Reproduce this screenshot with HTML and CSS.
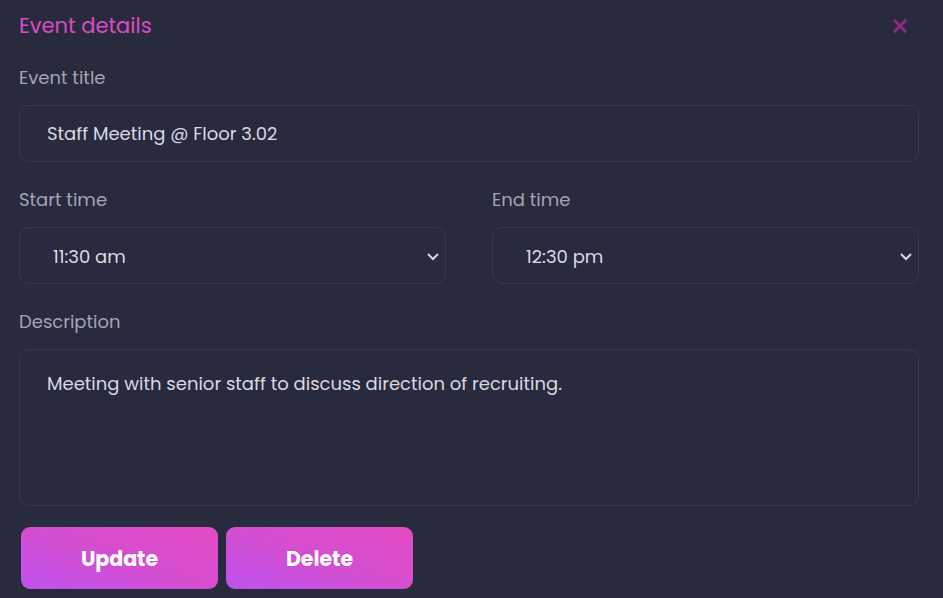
FILE: index.html
```html
<!DOCTYPE html>
<html>
<head>
<meta charset="utf-8">
<link rel="stylesheet" href="styles.css">
</head>
<body>
<div class="modal">
  <div class="header">
    <h2 class="title">Event details</h2>
    <button class="close" aria-label="Close">
      <svg width="14" height="14" viewBox="0 0 14 14"><path d="M2 2L12 12M12 2L2 12" stroke="#8e2c80" stroke-width="3" stroke-linecap="square"/></svg>
    </button>
  </div>
  <label class="label">Event title</label>
  <div class="field input">Staff Meeting @ Floor 3.02</div>
  <div class="row">
    <div class="col">
      <label class="label">Start time</label>
      <div class="field select"><span>11:30 am</span>
        <svg class="chev" width="14" height="9" viewBox="0 0 14 9"><path d="M2 2L7 7L12 2" fill="none" stroke="#d8d9e2" stroke-width="2"/></svg>
      </div>
    </div>
    <div class="col">
      <label class="label">End time</label>
      <div class="field select"><span>12:30 pm</span>
        <svg class="chev" width="14" height="9" viewBox="0 0 14 9"><path d="M2 2L7 7L12 2" fill="none" stroke="#d8d9e2" stroke-width="2"/></svg>
      </div>
    </div>
  </div>
  <label class="label">Description</label>
  <div class="field textarea">Meeting with senior staff to discuss direction of recruiting.</div>
  <div class="actions">
    <button class="btn btn-update">Update</button>
    <button class="btn btn-delete">Delete</button>
  </div>
</div>
</body>
</html>
```
FILE: styles.css
```css
* { box-sizing: border-box; }
html, body { margin: 0; padding: 0; background: #282a3d; height: 100%; }
body { font-family: "Poppins", "Open Sans", sans-serif; color: #d9dae3; }
.modal { padding: 0 24px 0 19px; }
.header { display: flex; justify-content: space-between; align-items: center; height: 52px; }
.title { margin: 0; font-weight: 400; font-size: 21px; color: #dc4cc4; line-height: 52px; }
.close { background: none; border: none; padding: 0; margin-right: 12px; display: flex; cursor: pointer; }
.label { display: block; font-size: 18px; line-height: 24px; color: #a3a5b4; margin-top: 14px; }
.field { border: 1px solid #343954; border-radius: 10px; font-size: 18px; color: #d9dae3; margin-top: 15px; }
.input { height: 57px; display: flex; align-items: center; padding: 0 27px; }
.row { display: flex; gap: 46px; margin-top: 2px; }
.row .label { margin-top: 24px; }
.col { flex: 1; }
.select { height: 57px; display: flex; align-items: center; justify-content: space-between; padding: 1px 5px 0 33px; }
.row + .label { margin-top: 26px; }
.textarea { height: 157px; padding: 23px 27px; line-height: 22px; }
.actions { display: flex; gap: 8px; margin: 21px 0 0 2px; }
.btn { border: none; border-radius: 9px; height: 62px; color: #fff; font-family: "Poppins", "Open Sans", sans-serif; font-weight: 700; font-size: 20.5px; background: linear-gradient(20deg, #bd52ee 0%, #d44ed0 50%, #e34bc5 100%); }
.btn-update { width: 197px; }
.btn-delete { width: 187px; }
```
